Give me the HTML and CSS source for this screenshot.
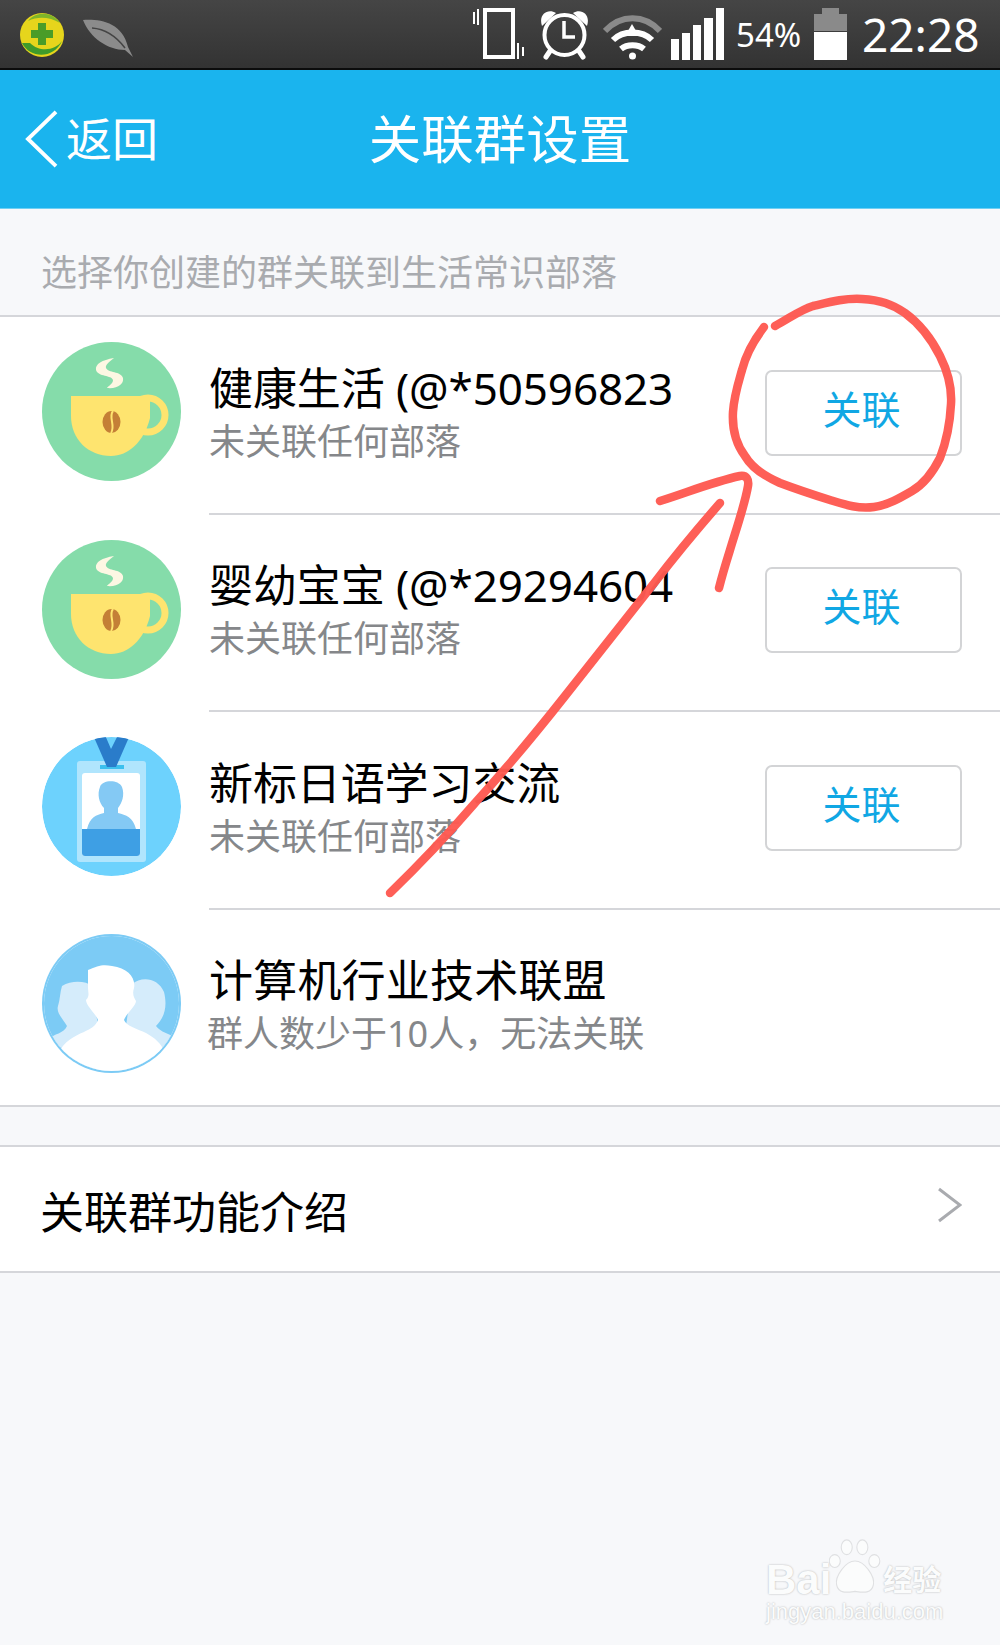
FILE: index.html
```html
<!DOCTYPE html>
<html lang="zh-CN">
<head>
<meta charset="utf-8">
<title>关联群设置</title>
<link rel="stylesheet" href="styles.css">
</head>
<body>
<svg class="defs" width="0" height="0" aria-hidden="true">
  <defs>
    <clipPath id="avatar-clip"><circle cx="69.5" cy="69.5" r="69.5"/></clipPath>
    <clipPath id="group-clip"><circle cx="69.5" cy="69.5" r="67.5"/></clipPath>
    <symbol id="coffee" viewBox="0 0 139 139">
      <circle cx="69.5" cy="69.5" r="69.5" fill="#85dcaa"/>
      <circle cx="106" cy="73" r="17" fill="none" stroke="#fee46f" stroke-width="7"/>
      <path d="M29 54H108V76C102 100 86 114 69 114C46 114 29 97 29 74Z" fill="#fee46f"/>
      <path d="M72 16C60 18 53 22 54 28C56 35 70 33 71 38C71 42 66 44 65 46C76 47 82 42 81 36C79 29 66 31 64 26C63 23 68 19 72 16Z" fill="#fdf7e3"/>
      <ellipse cx="69.5" cy="80" rx="9" ry="11" fill="#c47f36"/>
      <path d="M71 69C66 75 74 84 69 91" fill="none" stroke="#fee46f" stroke-width="2"/>
    </symbol>
  </defs>
</svg>

<div class="page">
  <div class="statusbar">
    <svg class="si-360" viewBox="0 0 44 44" aria-hidden="true">
      <circle cx="22" cy="22" r="22" fill="#e6d51c"/>
      <path d="M2 30C10 46 34 46 42 28C36 37 20 40 10 30Z" fill="#3f9b2b"/>
      <path d="M8 8C16 -2 32 -2 40 10C30 4 18 3 8 8Z" fill="#7fb52a"/>
      <path d="M18 10h8v7h7v8h-7v7h-8v-7h-7v-8h7Z" fill="#4a9c28"/>
    </svg>
    <svg class="si-leaf" viewBox="83 19 50 38" aria-hidden="true">
      <path d="M83 20C100 19 122 22 128 47L133 57L125 50C108 50 90 38 83 20Z" fill="#8b8b8b"/>
      <path d="M92 28C105 29 116 36 125 48" fill="none" stroke="#444" stroke-width="1.5"/>
    </svg>
    <div class="status-right">
      <svg class="si-phone" viewBox="474 8 53 52" aria-hidden="true">
        <rect x="486" y="10" width="28" height="47" fill="none" stroke="#fff" stroke-width="4"/>
        <path d="M475 12v12M479 9v16M519 43v16M524 47v9" fill="none" stroke="#fff" stroke-width="2"/>
      </svg>
      <svg class="si-alarm" viewBox="540 10 51 50" aria-hidden="true">
        <circle cx="565.5" cy="35" r="20" fill="none" stroke="#fff" stroke-width="4"/>
        <path d="M543 26C539 14 549 8 557 13ZM588 26C592 14 582 8 574 13Z" fill="#fff"/>
        <path d="M551 51l-4 6M580 51l4 6" stroke="#fff" stroke-width="5" stroke-linecap="round"/>
        <path d="M565 21V37H576" fill="none" stroke="#fff" stroke-width="3.5"/>
      </svg>
      <svg class="si-wifi" viewBox="604 15 59 46" aria-hidden="true">
        <path d="M606 31C622 14 645 14 661 31" fill="none" stroke="#8a8a8a" stroke-width="6"/>
        <path d="M614 40C624 30 643 30 653 40" fill="none" stroke="#fff" stroke-width="6"/>
        <path d="M622 49C628 44 639 44 645 49" fill="none" stroke="#fff" stroke-width="6"/>
        <path d="M633 24L640 36H626Z" fill="#fff"/>
        <circle cx="633.5" cy="56" r="3.5" fill="#fff"/>
      </svg>
      <svg class="si-signal" viewBox="672 8 53 52" aria-hidden="true">
        <path d="M672 39h8v21h-8ZM683 33h8v27h-8ZM694 25h8v35h-8ZM705 18h9v42h-9ZM717 8h8v52h-8Z" fill="#fff"/>
      </svg>
      <span class="pct">54%</span>
      <svg class="si-batt" viewBox="815 8 33 52" aria-hidden="true">
        <path d="M823 8h17v6h8v17h-33V14h8Z" fill="#8a8a8a"/>
        <rect x="815" y="32" width="33" height="28" fill="#fff"/>
      </svg>
      <span class="clock">22:28</span>
    </div>
  </div>

  <header class="header">
    <div class="back">
      <svg class="back-icon" viewBox="0 0 34 60" aria-hidden="true">
        <path d="M32 2L3 30L32 58" fill="none" stroke="#fff" stroke-width="4"/>
      </svg>
      <span>返回</span>
    </div>
    <h1 class="title">关联群设置</h1>
  </header>

  <p class="hint">选择你创建的群关联到生活常识部落</p>

  <section class="list">
    <div class="row">
      <svg class="avatar" aria-hidden="true"><use href="#coffee"/></svg>
      <div class="row-main">
        <div class="info">
          <div class="name">健康生活 (@*50596823</div>
          <div class="sub">未关联任何部落</div>
        </div>
        <div class="btn">关联</div>
      </div>
    </div>
    <div class="row">
      <svg class="avatar" aria-hidden="true"><use href="#coffee"/></svg>
      <div class="row-main">
        <div class="info">
          <div class="name">婴幼宝宝 (@*29294604</div>
          <div class="sub">未关联任何部落</div>
        </div>
        <div class="btn">关联</div>
      </div>
    </div>
    <div class="row">
      <svg class="avatar" viewBox="0 0 139 139" aria-hidden="true">
        <g clip-path="url(#avatar-clip)">
          <circle cx="69.5" cy="69.5" r="69.5" fill="#6dd2fd"/>
          <rect x="35" y="24" width="69" height="101" rx="3" fill="#b0e5fd"/>
          <rect x="58" y="28" width="24" height="4" fill="#3cc0ee"/>
          <path d="M51 -2H63L69 12L76 -2H88L74 30H65Z" fill="#2a7cca"/>
          <rect x="40" y="36" width="58" height="83" rx="3" fill="#fff"/>
          <path d="M58 50C60 43 76 42 80 50C83 58 80 66 76 71V76C84 78 91 80 94 92H45C48 80 54 78 62 76V71C57 66 55 57 58 50Z" fill="#84c9f4"/>
          <path d="M40 92H98V116a3 3 0 0 1-3 3H43a3 3 0 0 1-3-3Z" fill="#3e9fe4"/>
        </g>
      </svg>
      <div class="row-main">
        <div class="info">
          <div class="name">新标日语学习交流</div>
          <div class="sub">未关联任何部落</div>
        </div>
        <div class="btn">关联</div>
      </div>
    </div>
    <div class="row row-last">
      <svg class="avatar" viewBox="0 0 139 139" aria-hidden="true">
        <circle cx="69.5" cy="69.5" r="69.5" fill="#7ccbf5"/>
        <circle cx="69.5" cy="69.5" r="67.5" fill="#fff"/>
        <g clip-path="url(#group-clip)">
          <rect width="139" height="139" fill="#7ccbf5"/>
          <path d="M20 52C30 46 44 47 50 52L56 92L30 120L6 106C12 99 22 100 25 92C20 84 14 78 16 72C18 66 18 58 20 52Z" fill="#d5ecfb"/>
          <path d="M90 50C100 42 116 44 122 58C125 70 124 82 114 92C118 98 128 100 134 104L112 122L84 92Z" fill="#d5ecfb"/>
          <path d="M46 36C56 32 60 30 70 32C86 34 94 44 92 54C90 60 92 64 94 67C94 72 84 80 82 86C84 92 96 95 104 99C113 104 120 110 122 118V139H17V118C22 108 32 102 42 98C48 95 54 92 56 86C54 80 44 72 44 66C48 62 46 58 46 54Z" fill="#fff"/>
        </g>
      </svg>
      <div class="row-main">
        <div class="info info-shift">
          <div class="name">计算机行业技术联盟</div>
          <div class="sub">群人数少于10人，无法关联</div>
        </div>
      </div>
    </div>
  </section>

  <section class="intro">
    <span class="intro-text">关联群功能介绍</span>
    <svg class="chev" viewBox="0 0 25 36" aria-hidden="true">
      <path d="M2 2L23 18L2 34" fill="none" stroke="#a9abaf" stroke-width="3"/>
    </svg>
  </section>

  <div class="watermark">
    <div class="wm-top">
      <span class="wm-word">Bai</span>
      <svg class="paw" viewBox="0 0 56 62" aria-hidden="true">
        <g fill="#fbfcfc" stroke="#dfe0e2" stroke-width="1.2">
          <ellipse cx="6" cy="24" rx="6" ry="7"/>
          <ellipse cx="19" cy="9" rx="6" ry="8"/>
          <ellipse cx="36" cy="9" rx="6" ry="8"/>
          <ellipse cx="49" cy="24" rx="6" ry="7"/>
          <path d="M28 24C38 24 50 40 48 50C46 60 36 58 28 57C20 58 10 60 8 50C6 40 18 24 28 24Z"/>
        </g>
      </svg>
      <span class="wm-cn">经验</span>
    </div>
    <div class="wm-url">jingyan.baidu.com</div>
  </div>

  <svg class="scribble" viewBox="0 0 1000 1645" aria-hidden="true">
    <g fill="none" stroke="#fe5a52" stroke-width="8.5" stroke-linecap="round" stroke-linejoin="round">
      <path d="M775 326C790 318 800 310 813 306C830 302 845 298 862 299C880 300 892 304 905 313C920 324 932 340 940 356C948 372 952 388 951 404C950 424 947 440 940 458C932 474 924 484 912 491C900 498 888 505 874 507C858 509 846 505 830 500C814 495 796 489 780 483C764 476 752 468 745 456C736 444 732 430 733 412C734 396 738 384 742 370C746 354 754 340 764 327"/>
      <path d="M660 501C686 493 712 482 740 476C747 475 749 480 748 486C745 504 736 530 730 550C725 566 722 576 719 588"/>
      <path d="M720 503C700 526 678 552 655 582C630 614 600 652 565 696C535 734 505 770 475 803C450 832 420 864 390 893"/>
    </g>
  </svg>
</div>
</body>
</html>
```
FILE: styles.css
```css
* { box-sizing: border-box; }
html, body { margin: 0; padding: 0; }
body {
  width: 1000px;
  height: 1645px;
  overflow: hidden;
  background: #f7f8fa;
  font-family: "Noto Sans", "Noto Sans CJK SC", sans-serif;
  color: #000;
}
.defs { position: absolute; }
.page { position: relative; width: 1000px; height: 1645px; }

.statusbar {
  height: 70px;
  display: flex;
  align-items: flex-start;
  background: linear-gradient(#454545, #333);
  border-bottom: 2px solid #0c0c0c;
  padding-left: 20px;
  color: #fff;
}
.si-360 { width: 44px; height: 44px; margin-top: 13px; }
.si-leaf { width: 50px; height: 38px; margin: 19px 0 0 19px; }
.status-right { margin-left: auto; display: flex; align-items: flex-start; padding-right: 22px; }
.si-phone { width: 53px; height: 52px; margin-top: 8px; }
.si-alarm { width: 51px; height: 50px; margin: 10px 0 0 13px; }
.si-wifi { width: 59px; height: 46px; margin: 15px 0 0 13px; }
.si-signal { width: 53px; height: 52px; margin: 8px 0 0 9px; }
.pct { width: 65px; margin: 13px 0 0 12px; font-size: 33px; line-height: 44px; white-space: nowrap; }
.si-batt { width: 33px; height: 52px; margin: 8px 0 0 13px; }
.clock { width: 116px; margin: 3px 0 0 15px; font-size: 46px; line-height: 62px; white-space: nowrap; }

.header {
  position: relative;
  height: 139px;
  background: #1ab4ee;
  border-bottom: 1px solid #6fd0f4;
  color: #fff;
  display: flex;
  align-items: center;
  justify-content: center;
}
.back {
  position: absolute;
  left: 25px;
  top: 0;
  height: 138px;
  display: flex;
  align-items: center;
  gap: 8px;
  font-size: 46px;
}
.back span { margin-top: -7px; }
.back-icon { width: 33px; height: 58px; }
.title { margin: 0; font-size: 52.5px; font-weight: 400; line-height: 1; }

.hint {
  margin: 0;
  height: 106px;
  padding: 37px 0 0 41px;
  font-size: 36px;
  line-height: 54px;
  color: #a9abaf;
}

.list {
  background: #fff;
  border-top: 2px solid #d5d6da;
}
.row {
  display: flex;
  align-items: center;
  height: 197.5px;
  padding-left: 42px;
}
.avatar { flex: none; width: 139px; height: 139px; margin-top: -8px; }
.row-main {
  flex: 1;
  align-self: stretch;
  margin-left: 28px;
  display: flex;
  align-items: center;
  justify-content: space-between;
  padding-right: 38px;
  border-bottom: 2px solid #d5d6da;
}
.row-last { border-bottom: 2px solid #d5d6da; }
.row-last .row-main { border-bottom: 0; }
.info { margin-top: 0; }
.name { font-size: 44px; line-height: 54px; white-space: nowrap; letter-spacing: -.1px; }
.sub { font-size: 36px; line-height: 54px; color: #85878a; white-space: nowrap; }
.info-shift .name { letter-spacing: .2px; }
.info-shift .sub { margin-left: -2px; }
.btn {
  width: 197px;
  height: 86px;
  margin-bottom: 4px;
  padding: 0 4px 12px 0;
  border: 2px solid #d3d4d6;
  border-radius: 7px;
  background: #fff;
  color: #10a7e4;
  font-size: 39px;
  display: flex;
  align-items: center;
  justify-content: center;
}

.intro {
  margin-top: 38px;
  height: 128px;
  background: #fff;
  border-top: 2px solid #d5d6da;
  border-bottom: 2px solid #d5d6da;
  padding: 0 38px 0 40px;
  display: flex;
  align-items: center;
  justify-content: space-between;
  font-size: 44px;
}
.intro-text { margin-top: 2px; }
.chev { width: 25px; height: 36px; margin-top: -8px; }

.watermark {
  position: absolute;
  left: 766px;
  top: 1538px;
  color: #fbfcfc;
  font-family: "Liberation Sans", "Noto Sans CJK SC", sans-serif;
  text-shadow: 0 0 2px rgba(0, 0, 0, .3);
}
.wm-top {
  display: flex;
  align-items: flex-end;
  height: 58px;
  font-size: 42px;
  font-weight: 700;
  line-height: 48px;
}
.wm-word { margin-bottom: -8px; }
.paw { width: 52px; height: 57px; margin: 0 1px 0 -2px; }
.wm-cn { font-size: 29px; line-height: 44px; margin-left: 1px; margin-bottom: -7px; }
.wm-url { font-size: 22px; line-height: 28px; margin-top: 2px; white-space: nowrap; }

.scribble {
  position: absolute;
  left: 0;
  top: 0;
  width: 1000px;
  height: 1645px;
  pointer-events: none;
  opacity: .97;
}
```
